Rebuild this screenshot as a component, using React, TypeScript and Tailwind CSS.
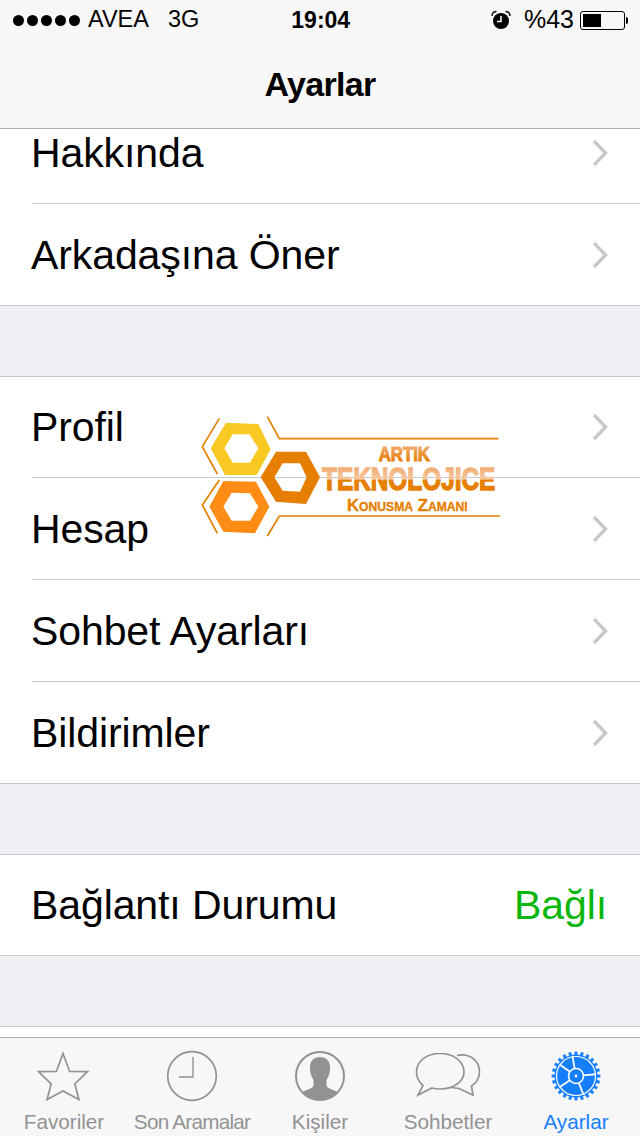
import { ReactNode } from 'react';

const font = "[font-family:'Liberation_Sans',Arial,sans-serif]";

function Chevron() {
  return (
    <svg width="16" height="28" viewBox="0 0 16 28" className="shrink-0">
      <path d="M2 2 L13.5 14 L2 26" fill="none" stroke="#c7c7cc" strokeWidth="3.4" />
    </svg>
  );
}

function Label({ children, low }: { children: string; low?: boolean }) {
  return <span className={`-ml-px text-[41px] leading-none text-black tracking-[-0.1px] ${low ? 'pt-[2px]' : ''}`}>{children}</span>;
}

function Row({ label, right, h = 'h-[102px]', divider = true, low = true }: { label: string; right?: ReactNode; h?: string; divider?: boolean; low?: boolean }) {
  return (
    <div className={`${h} pl-8 bg-white`}>
      <div className={`h-full flex items-center justify-between pr-8 ${divider ? 'border-b border-[#c8c7cc]' : ''}`}>
        <Label low={low}>{label}</Label>
        {right ?? <Chevron />}
      </div>
    </div>
  );
}

function Gear() {
  const teeth = Array.from({ length: 24 }, (_, i) => (i * 360) / 24);
  const spokes = [-10, 85, 158, 236, 305];
  return (
    <svg width="52" height="52" viewBox="0 0 52 52">
      {teeth.map((a) => (
        <rect key={a} x="24.5" y="1.6" width="3" height="5" fill="#147efb" transform={`rotate(${a} 26 26)`} />
      ))}
      <circle cx="26" cy="26" r="21.5" fill="#147efb" />
      <circle cx="26" cy="26" r="19.5" fill="#147efb" stroke="#fff" strokeWidth="1.2" />
      {spokes.map((a) => (
        <rect key={a} x="25.1" y="6" width="1.8" height="13" fill="#fff" transform={`rotate(${a} 26 26)`} />
      ))}
      <circle cx="26" cy="26" r="7.5" fill="#147efb" stroke="#fff" strokeWidth="1.6" />
      <circle cx="26" cy="26" r="1.4" fill="#fff" />
    </svg>
  );
}

const tabs: { label: string; active?: boolean; tight?: boolean; icon: ReactNode }[] = [
  {
    label: 'Favoriler',
    icon: (
      <svg width="56" height="54" viewBox="0 0 56 54">
        <path d="M27 4.5 L33.6 22.5 L51.5 22.7 L38.8 35 L43 50.5 L27 42 L11 50.5 L15.2 35 L2.5 22.7 L20.4 22.5 Z" fill="none" stroke="#929292" strokeWidth="1.7" />
      </svg>
    ),
  },
  {
    label: 'Son Aramalar',
    tight: true,
    icon: (
      <svg width="52" height="52" viewBox="0 0 52 52">
        <circle cx="26" cy="26" r="24.3" fill="none" stroke="#929292" strokeWidth="1.7" />
        <path d="M27 7 V27 H13" fill="none" stroke="#929292" strokeWidth="1.4" />
      </svg>
    ),
  },
  {
    label: 'Kişiler',
    icon: (
      <svg width="52" height="52" viewBox="0 0 52 52">
        <defs>
          <clipPath id="kisi">
            <circle cx="26" cy="26" r="23.5" />
          </clipPath>
        </defs>
        <circle cx="26" cy="26" r="24" fill="none" stroke="#929292" strokeWidth="2" />
        <path
          clipPath="url(#kisi)"
          d="M26 7 C33 7 36.5 12 36 19 C36 23 34.5 27 32.5 30 L32.5 36 C34 39 41 40 45 43 V52 H7 V43 C11 40 18 39 19.5 36 L19.5 30 C17.5 27 16 23 16 19 C15.5 12 19 7 26 7 Z"
          fill="#929292"
        />
      </svg>
    ),
  },
  {
    label: 'Sohbetler',
    icon: (
      <svg width="66" height="46" viewBox="0 1 66 46">
        <path d="M42 3.5 C54 1 64.5 8 64.5 20 C64.5 27 60 32 56.5 34 L58 43 L44 36.5 L36 35.5" fill="none" stroke="#929292" strokeWidth="1.7" />
        <path d="M25 1.5 C38 1.5 49 9 49 20 C49 30 38 37 25 37 C22 37 19 36.5 17 36 L3 43 L8 33.5 C4 30 1.5 25.5 1.5 20 C1.5 9 12 1.5 25 1.5 Z" fill="#f7f7f7" stroke="#929292" strokeWidth="1.7" />
      </svg>
    ),
  },
  { label: 'Ayarlar', active: true, icon: <Gear /> },
];

function Logo() {
  const face = "'Liberation Sans', Arial, sans-serif";
  return (
    <svg width="320" height="150" viewBox="0 0 960 450" className="absolute left-[190px] top-[400px]">
      <defs>
        <linearGradient id="tek" gradientUnits="userSpaceOnUse" x1="0" y1="204" x2="0" y2="272">
          <stop offset="0" stopColor="#f2ad72" />
          <stop offset="0.5" stopColor="#f5c9a2" />
          <stop offset="0.52" stopColor="#e67e00" />
          <stop offset="1" stopColor="#e67e00" />
        </linearGradient>
        <linearGradient id="art" gradientUnits="userSpaceOnUse" x1="0" y1="140" x2="0" y2="183">
          <stop offset="0" stopColor="#f2a868" />
          <stop offset="1" stopColor="#e67e00" />
        </linearGradient>
      </defs>
      <g fill="none" stroke="#e67e00" strokeWidth="5">
        <path d="M232 50 L268 116 H925" />
        <path d="M88 55 L37 140 L82 222" />
        <path d="M88 240 L37 315 L82 400" />
        <path d="M232 408 L268 348 H930" />
      </g>
      <path fillRule="evenodd" fill="#f8c823" d="M62 145 L108 68 L205 72 L242 148 L200 225 L105 225 Z M103 145 L128 103 L178 103 L205 145 L180 188 L128 188 Z" />
      <path fillRule="evenodd" fill="#e67e00" d="M212 232 L258 155 L348 155 L390 232 L348 312 L258 305 Z M253 232 L278 190 L330 190 L350 232 L330 275 L278 272 Z" />
      <path fillRule="evenodd" fill="#ff8c14" d="M58 320 L100 243 L198 245 L238 320 L195 400 L100 395 Z M100 320 L125 278 L180 280 L205 320 L180 362 L125 362 Z" />
      <text x="643" y="183" textAnchor="middle" fill="url(#art)" stroke="url(#art)" strokeWidth="3" fontFamily={face} fontWeight="700" fontSize="59" textLength="154" lengthAdjust="spacingAndGlyphs">ARTIK</text>
      <text x="656" y="271" textAnchor="middle" fill="url(#tek)" stroke="url(#tek)" strokeWidth="4" fontFamily={face} fontWeight="700" fontSize="92" textLength="520" lengthAdjust="spacingAndGlyphs">TEKNOLOJICE</text>
      <text x="652" y="332" textAnchor="middle" fill="#e67e00" stroke="#e67e00" strokeWidth="1" fontFamily={face} fontWeight="700" fontSize="51" textLength="362" lengthAdjust="spacingAndGlyphs">
        K<tspan fontSize="37">ONUSMA</tspan> Z<tspan fontSize="37">AMANI</tspan>
      </text>
    </svg>
  );
}

export default function App() {
  return (
    <div className={`${font} relative w-[640px] h-[1136px] overflow-hidden bg-[#efeff4] flex flex-col`}>
      {/* status + nav */}
      <header className="h-[129px] shrink-0 bg-[#f7f7f7] border-b border-[#b2b2b2] flex flex-col">
        <div className="h-10 flex items-center pl-[13px] pr-[12px] text-[23.5px] text-black">
          <div className="flex gap-[3px]">
            {[0, 1, 2, 3, 4].map((d) => (
              <span key={d} className="w-[11px] h-[11px] rounded-full bg-black" />
            ))}
          </div>
          <span className="ml-[8px]">AVEA</span>
          <span className="ml-[19px]">3G</span>
          <span className="ml-[92px] font-bold text-[23px]">19:04</span>
          <svg width="20" height="20" viewBox="0 0 20 20" className="ml-auto">
            <circle cx="10" cy="11" r="8" fill="#000" />
            <path d="M10 6 V11.5 H6" fill="none" stroke="#fff" strokeWidth="1.5" />
            <path d="M1 6 C1 3 3 1.5 5.5 1.5 M19 6 C19 3 17 1.5 14.5 1.5" fill="none" stroke="#000" strokeWidth="1.4" />
          </svg>
          <span className="ml-[13px] text-[25px]">%43</span>
          <div className="ml-[6px] flex items-center">
            <div className="w-[45px] h-[19px] rounded-[3px] border border-black p-[2px]">
              <div className="w-[18px] h-full bg-black" />
            </div>
            <div className="ml-[1px] w-[2px] h-[7px] bg-black rounded-r-sm" />
          </div>
        </div>
        <div className="h-[88px] flex items-center justify-center text-[34px] font-bold text-black tracking-[-0.7px]">
          Ayarlar
        </div>
      </header>

      {/* scrolled settings list */}
      <main className="flex-1 min-h-0 flex flex-col">
        <div className="border-b border-[#c8c7cc]">
          <div className="h-[75px] pl-8 bg-white">
            <div className="h-full flex items-center justify-between pr-8 pb-[26px] border-b border-[#c8c7cc]">
              <Label>Hakkında</Label>
              <Chevron />
            </div>
          </div>
          <Row label="Arkadaşına Öner" h="h-[101px]" divider={false} />
        </div>
        <div className="h-[70px]" />
        <div className="border-y border-[#c8c7cc]">
          <Row label="Profil" h="h-[101px]" low={false} />
          <Row label="Hesap" />
          <Row label="Sohbet Ayarları" />
          <Row label="Bildirimler" h="h-[101px]" divider={false} />
        </div>
        <div className="h-[70px]" />
        <div className="border-y border-[#c8c7cc]">
          <Row label="Bağlantı Durumu" h="h-[100px]" divider={false} low={false} right={<span className="text-[41px] leading-none text-[#09b60c] mr-px tracking-[-0.1px]">Bağlı</span>} />
        </div>
        <div className="h-[70px]" />
        <div className="flex-1 bg-white border-t border-[#c8c7cc]" />
      </main>

      {/* tab bar */}
      <nav className="h-[99px] shrink-0 bg-[#f7f7f7] border-t border-[#b2b2b2] grid grid-cols-5">
        {tabs.map((t) => (
          <div key={t.label} className="flex flex-col items-center">
            <div className="h-[64px] flex items-center justify-center pt-[12px]">{t.icon}</div>
            <span className={`text-[20.7px] leading-none mt-[10px] whitespace-nowrap ${t.tight ? 'tracking-[-0.75px]' : ''} ${t.active ? 'text-[#147efb]' : 'text-[#929292]'}`}>{t.label}</span>
          </div>
        ))}
      </nav>

      <Logo />
    </div>
  );
}
